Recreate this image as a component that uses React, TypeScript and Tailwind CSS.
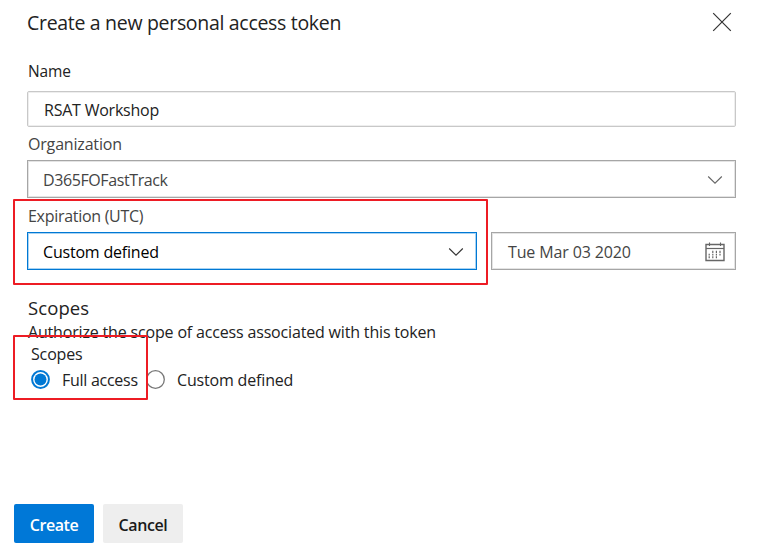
import React from "react";

function Chevron({ color }: { color: string }) {
  return (
    <svg width="16" height="10" viewBox="0 0 16 10" fill="none" stroke={color} strokeWidth="1.1" className="mt-px">
      <path d="M1.2 1.5 8 8.2 14.8 1.5" />
    </svg>
  );
}

function Calendar() {
  return (
    <svg width="20" height="20" viewBox="0 0 20 20" fill="none" stroke="#666666" className="mt-px">
      <path d="M1 2.5H19V18.5H1Z" strokeWidth="1.4" />
      <path d="M1 6.5H19" strokeWidth="1.2" />
      <path d="M4.5 0.5V4M15.5 0.5V4" strokeWidth="1.1" />
      <path d="M7.8 8.8V11M11.4 8.8V11M15 8.8V11M4.2 11.7V13.4M7.8 11.7V13.4M11.4 11.7V13.4M15 11.7V13.4M4.2 14.3V16.2M7.8 14.3V16.2M11.4 14.3V16.2" strokeWidth="1.2" />
    </svg>
  );
}

export default function App() {
  return (
    <main className="relative flex h-[558px] w-[757px] flex-col overflow-hidden bg-white font-['Open_Sans','Noto_Sans',sans-serif] text-[16px] whitespace-nowrap text-[#222222]">
      <header className="flex h-[44px] items-center justify-between pr-[25px] pl-[27px]">
        <h1 className="pt-[2px] text-[19.5px] leading-[44px] tracking-[-0.31px]">Create a new personal access token</h1>
        <button aria-label="Close" className="-mt-px">
          <svg width="20" height="20" viewBox="0 0 20 20" fill="none" stroke="#333333" strokeWidth="1.2">
            <path d="M1.2 1.2 18.8 18.8M18.8 1.2 1.2 18.8" />
          </svg>
        </button>
      </header>

      <section className="flex flex-col pr-[21px] pl-[27px]">
        <label className="mt-[17px] h-[20px] pl-px text-[15.5px] leading-[20px] tracking-[-0.1px]">Name</label>
        <div className="mt-[10px] flex h-[36px] items-center rounded-[2px] border border-[#c8c8c8] pl-[16px] shadow-[inset_0_0_0_1px_#eeeeee]">
          <span className="pt-[2px] tracking-[-0.22px]">RSAT Workshop</span>
        </div>
        <label className="mt-[7px] h-[20px] pl-px leading-[20px] tracking-[-0.18px] text-[#444444]">Organization</label>
        <div className="mt-[6px] flex h-[38px] items-center justify-between border border-[#a6a6a6] pr-[12px] pl-[15px] shadow-[inset_0_0_0_1px_#e4e4e4]">
          <span className="pt-[2px] tracking-[-0.4px] text-[#444444]">D365FOFastTrack</span>
          <Chevron color="#666666" />
        </div>
        <label className="mt-[8px] h-[20px] pl-px leading-[20px] tracking-[-0.29px] text-[#444444]">Expiration (UTC)</label>
        <div className="mt-[6px] flex h-[38px] gap-[14px]">
          <div className="flex w-[450px] items-center justify-between border border-[#0078d4] pr-[12px] pl-[15px] shadow-[inset_0_0_0_1px_#a9d3f2]">
            <span className="pt-[2px] tracking-[-0.2px] text-black">Custom defined</span>
            <Chevron color="#333333" />
          </div>
          <div className="flex flex-1 items-center justify-between border border-[#a6a6a6] pr-[10px] pl-[16px] shadow-[inset_0_0_0_1px_#e4e4e4]">
            <span className="pt-[2px] tracking-[-0.13px] text-[#444444]">Tue Mar 03 2020</span>
            <Calendar />
          </div>
        </div>
      </section>

      <section className="flex flex-col pl-[27px]">
        <h2 className="mt-[26px] h-[24px] pl-px text-[18.5px] leading-[24px] tracking-[0.1px]">Scopes</h2>
        <p className="mt-[2px] h-[20px] pl-px leading-[20px] tracking-[-0.17px]">
          Authorize the scope of access associated with this token
        </p>
        <p className="mt-[2px] h-[20px] pl-[4px] leading-[20px] tracking-[-0.15px]">Scopes</p>
        <div className="mt-[6px] flex h-[20px] items-center pl-[4px]">
          <label className="flex w-[115px] items-center gap-[12px]">
            <svg width="19" height="19" viewBox="0 0 19 19" className="-mt-px shrink-0">
              <circle cx="9.5" cy="9.5" r="8.4" fill="white" stroke="#0078d4" strokeWidth="2" />
              <circle cx="9.5" cy="9.5" r="6" fill="#0078d4" />
            </svg>
            <span className="tracking-[-0.27px]">Full access</span>
          </label>
          <label className="flex items-center gap-[12px]">
            <svg width="19" height="19" viewBox="0 0 19 19" className="-mt-px shrink-0">
              <circle cx="9.5" cy="9.5" r="8.8" fill="white" stroke="#777777" strokeWidth="1.3" />
            </svg>
            <span className="tracking-[-0.17px]">Custom defined</span>
          </label>
        </div>
      </section>

      <footer className="mt-[114px] flex h-[39px] gap-[9px] pl-[14px] text-[16px] font-semibold tracking-[-0.4px]">
        <button className="w-[80px] rounded-[2px] bg-[#0078d7] pt-[2px] text-white">Create</button>
        <button className="w-[80px] rounded-[2px] bg-[#eeeeee] pt-[2px] text-[#1a1a1a]">Cancel</button>
      </footer>

      <div className="pointer-events-none absolute top-[199px] left-[13px] h-[86px] w-[475px] rounded-[1px] border-2 border-[#ed1c24]" />
      <div className="pointer-events-none absolute top-[335px] left-[13px] h-[65px] w-[135px] rounded-[1px] border-2 border-[#ed1c24]" />
    </main>
  );
}
